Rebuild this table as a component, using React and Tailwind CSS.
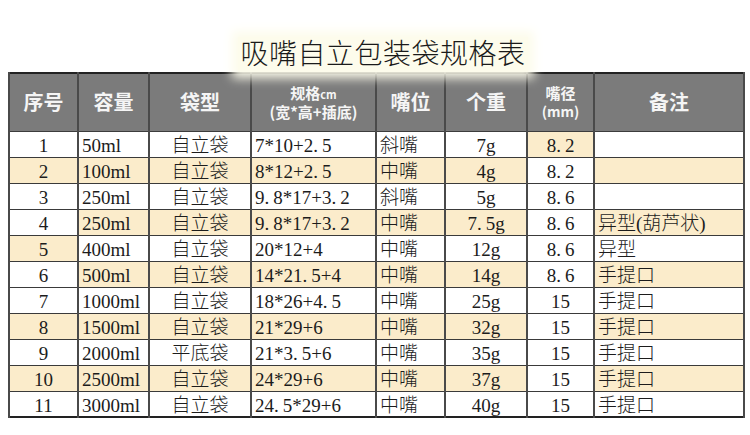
import React from "react";

// column widths match the source sheet
const cols = [69, 71, 102, 125, 69, 82, 67, 150];

const rows = [
  ["1", "50ml", "自立袋", "7*10+2.5", "斜嘴", "7g", "8.2", ""],
  ["2", "100ml", "自立袋", "8*12+2.5", "中嘴", "4g", "8.2", ""],
  ["3", "250ml", "自立袋", "9.8*17+3.2", "斜嘴", "5g", "8.6", ""],
  ["4", "250ml", "自立袋", "9.8*17+3.2", "中嘴", "7.5g", "8.6", "异型(葫芦状)"],
  ["5", "400ml", "自立袋", "20*12+4", "中嘴", "12g", "8.6", "异型"],
  ["6", "500ml", "自立袋", "14*21.5+4", "中嘴", "14g", "8.6", "手提口"],
  ["7", "1000ml", "自立袋", "18*26+4.5", "中嘴", "25g", "15", "手提口"],
  ["8", "1500ml", "自立袋", "21*29+6", "中嘴", "32g", "15", "手提口"],
  ["9", "2000ml", "平底袋", "21*3.5+6", "中嘴", "35g", "15", "手提口"],
  ["10", "2500ml", "自立袋", "24*29+6", "中嘴", "37g", "15", "手提口"],
  ["11", "3000ml", "自立袋", "24.5*29+6", "中嘴", "40g", "15", "手提口"],
];

// which columns are centred vs left aligned
const centred = [true, false, true, false, false, true, true, false];

// the sheet's fill is a bit irregular, copy it as is
function isFilled(r, c) {
  const n = r + 1;
  if (c === 0) return [2, 5, 8, 10].includes(n);
  if (c === 6) return n === 1;
  return n % 2 === 0;
}

// the sheet font gives the decimal point a full half-width cell
function Num({ text }) {
  const parts = text.split(".");
  return parts.map((p, i) => (
    <React.Fragment key={i}>
      {p}
      {i < parts.length - 1 && <span className="mr-[4px]">.</span>}
    </React.Fragment>
  ));
}

function HeaderCell({ children }) {
  return (
    <th className="border border-x-2 border-[#3c3c3c] border-x-[#4a4a4a] bg-[#7b7b7b] text-[#f5f5f5] font-bold text-center align-middle p-0">
      {children}
    </th>
  );
}

export default function App() {
  return (
    <div className="w-[750px] h-[435px] bg-white overflow-hidden" style={{ fontFamily: '"Noto Sans CJK SC", sans-serif' }}>
      <div className="h-[72px] flex justify-center pl-[16px]">
        <span className="mt-[37px] self-start text-[28px] leading-[28px] font-light text-[#1a1a1a] bg-[#fdfcec] shadow-[0_0_10px_6px_#fdfcec] px-[2px] h-[35px] pt-[1px] tracking-[0.5px]">
          吸嘴自立包装袋规格表
        </span>
      </div>
      <table className="ml-[8px] table-fixed border-collapse border-2 border-[#222]" style={{ width: 735 }}>
        <colgroup>
          {cols.map((w, i) => (
            <col key={i} style={{ width: w }} />
          ))}
        </colgroup>
        <thead>
          <tr className="h-[58px] text-[20px] leading-none">
            <HeaderCell>序号</HeaderCell>
            <HeaderCell>容量</HeaderCell>
            <HeaderCell>袋型</HeaderCell>
            <HeaderCell>
              <div className="text-[15px] leading-[18px]">
                规格<span className="text-[11px]">cm</span>
              </div>
              <div className="text-[15px] leading-[18px]">(宽*高+插底)</div>
            </HeaderCell>
            <HeaderCell>嘴位</HeaderCell>
            <HeaderCell>个重</HeaderCell>
            <HeaderCell>
              <div className="text-[15px] leading-[18px]">嘴径</div>
              <div className="text-[14px] leading-[18px]">(mm)</div>
            </HeaderCell>
            <HeaderCell>备注</HeaderCell>
          </tr>
        </thead>
        <tbody className="font-light" style={{ fontFamily: '"Liberation Serif", "Noto Sans CJK SC", serif' }}>
          {rows.map((row, r) => (
            <tr key={r} className="h-[26px] text-[19px] leading-none text-[#1c1c1c]">
              {row.map((cell, c) => (
                <td
                  key={c}
                  className={
                    "border border-[#3a3a3a] border-x-2 border-x-[#4a4a4a] align-middle pt-[3px] pb-0 whitespace-nowrap overflow-hidden " +
                    (centred[c] ? "text-center px-0 " : "text-left px-[3px] ") +
                    (isFilled(r, c) ? "bg-[#fbeccb]" : "bg-white")
                  }
                >
                  <Num text={cell} />
                </td>
              ))}
            </tr>
          ))}
        </tbody>
      </table>
    </div>
  );
}
